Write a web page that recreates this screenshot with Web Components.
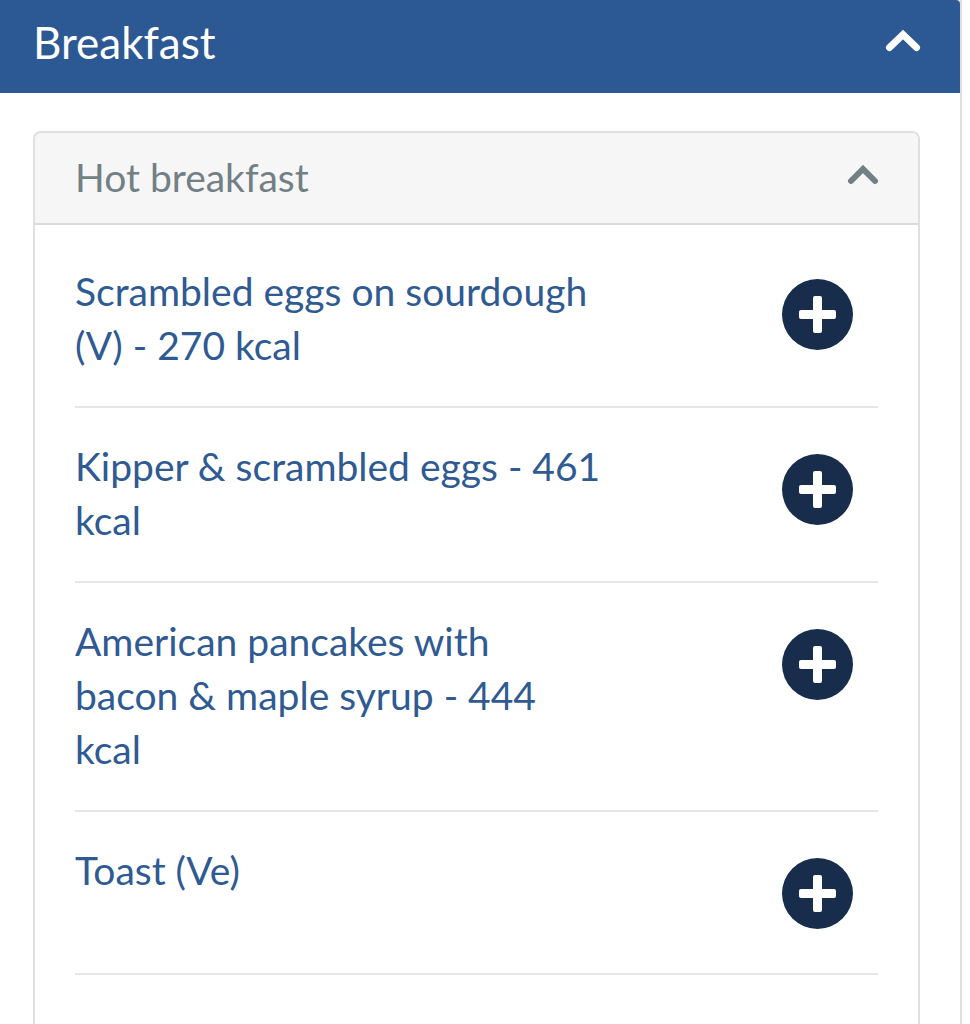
<!DOCTYPE html>
<html lang="en">
<head>
<meta charset="utf-8">
<meta name="viewport" content="width=device-width, initial-scale=1">
<title>Breakfast menu</title>
<style>
  body { margin: 0; background: #fff; font-family: Lato, "Open Sans", sans-serif; font-size: 39px; line-height: 54px; }
</style>
</head>
<body>
<menu-section heading="Breakfast">
  <menu-group heading="Hot breakfast">
    <menu-item>Scrambled eggs on sourdough (V) - 270 kcal</menu-item>
    <menu-item>Kipper &amp; scrambled eggs - 461 kcal</menu-item>
    <menu-item>American pancakes with bacon&nbsp;&amp; maple syrup - 444 kcal</menu-item>
    <menu-item>Toast (Ve)</menu-item>
  </menu-group>
</menu-section>

<template id="section-template">
  <style>
    :host { display: block; box-sizing: border-box; min-height: 100vh; margin-right: 8px; border-right: 2px solid #dfdfdf; }
    h2 { margin: 0; font: inherit; }
    button { display: flex; width: 100%; box-sizing: border-box; align-items: flex-start; justify-content: space-between; padding: 15px 39px 24px 33px; border: 0; border-top-right-radius: 4px; background: #2c5993; color: #fff; font: inherit; font-size: 44px; text-align: left; cursor: pointer; }
    svg { display: block; width: 36px; height: 24px; margin-top: 14px; }
    .body { padding: 38px 40px 0 33px; }
  </style>
  <h2><button type="button" aria-expanded="true"><span class="heading"></span>
    <svg viewBox="0 0 36 24" fill="none" stroke="currentColor" stroke-width="7" stroke-linecap="round" aria-hidden="true"><path d="M4.500 18.500L18 5.500L31.500 18.500"/></svg>
  </button></h2>
  <div class="body"><slot></slot></div>
</template>

<template id="group-template">
  <style>
    :host { display: block; box-sizing: border-box; min-height: calc(100vh - 131px); border: 2px solid #dfdfdf; border-bottom: 0; border-radius: 8px 8px 0 0; overflow: hidden; }
    h3 { margin: 0; font: inherit; }
    button { display: flex; width: 100%; box-sizing: border-box; align-items: flex-start; justify-content: space-between; padding: 17px 39px 19px 40px; border: 0; border-bottom: 2px solid #dadada; background: #f6f6f6; color: #727f85; font: inherit; text-align: left; cursor: pointer; }
    svg { display: block; width: 32px; height: 22px; margin-top: 14px; }
    .items { padding: 8px 40px 0; }
  </style>
  <h3><button type="button" aria-expanded="true"><span class="heading"></span>
    <svg viewBox="0 0 32 22" fill="none" stroke="currentColor" stroke-width="6" stroke-linecap="round" aria-hidden="true"><path d="M4 17L16 5L28 17"/></svg>
  </button></h3>
  <div class="items" role="list"><slot></slot></div>
</template>

<template id="item-template">
  <style>
    :host { display: flex; align-items: flex-start; justify-content: space-between; padding: 31px 25px 34px 0; border-bottom: 2px solid #e6e6e6; color: #2f5a92; }
    .name { flex: 0 1 532px; }
    button { flex: none; width: 71px; height: 71px; margin: 15px 0 10px; padding: 0; border: 0; border-radius: 50%; background: #182d4c; color: #fff; cursor: pointer; }
    svg { display: block; width: 71px; height: 71px; }
  </style>
  <span class="name"><slot></slot></span>
  <button type="button" aria-label="Add">
    <svg viewBox="0 0 71 71" fill="currentColor" aria-hidden="true"><rect x="31" y="17" width="9" height="37" rx="2"/><rect x="17" y="31" width="37" height="9" rx="2"/></svg>
  </button>
</template>

<script>
  class TemplateElement extends HTMLElement {
    constructor() {
      super();
      const template = document.getElementById(this.constructor.templateId);
      this.attachShadow({ mode: "open" }).append(template.content.cloneNode(true));
    }
    connectedCallback() {
      const heading = this.shadowRoot.querySelector(".heading");
      if (!heading) return;
      heading.textContent = this.getAttribute("heading");
      const button = this.shadowRoot.querySelector("button");
      const panel = this.shadowRoot.querySelector("div");
      button.addEventListener("click", () => {
        panel.hidden = !panel.hidden;
        button.setAttribute("aria-expanded", String(!panel.hidden));
      });
    }
  }
  customElements.define("menu-section", class extends TemplateElement { static templateId = "section-template"; });
  customElements.define("menu-group", class extends TemplateElement { static templateId = "group-template"; });
  customElements.define("menu-item", class extends TemplateElement {
    static templateId = "item-template";
    connectedCallback() { this.setAttribute("role", "listitem"); }
  });
</script>
</body>
</html>
